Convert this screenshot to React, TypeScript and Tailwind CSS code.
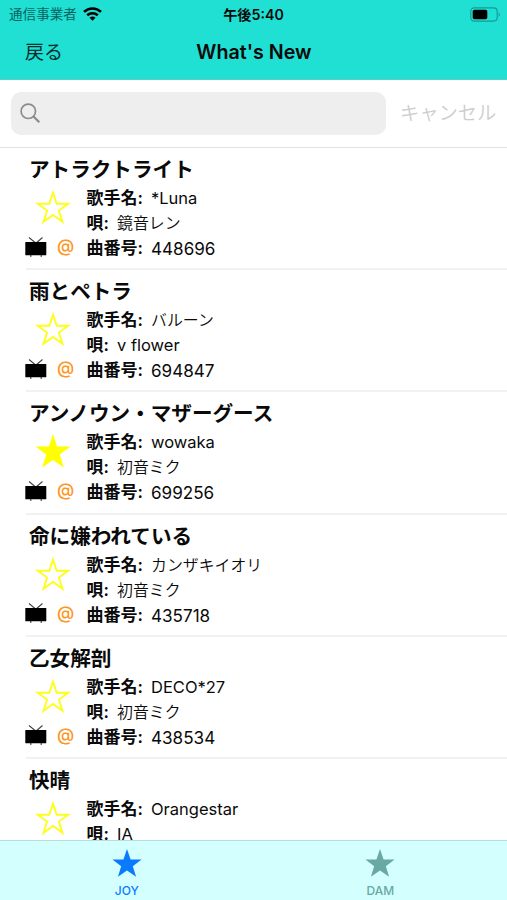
import React from "react";

type Song = {
  title: string;
  artist: string;
  vocal: string;
  number?: string;
  favorite?: boolean;
};

const songs: Song[] = [
  { title: "アトラクトライト", artist: "*Luna", vocal: "鏡音レン", number: "448696" },
  { title: "雨とペトラ", artist: "バルーン", vocal: "v flower", number: "694847" },
  { title: "アンノウン・マザーグース", artist: "wowaka", vocal: "初音ミク", number: "699256", favorite: true },
  { title: "命に嫌われている", artist: "カンザキイオリ", vocal: "初音ミク", number: "435718" },
  { title: "乙女解剖", artist: "DECO*27", vocal: "初音ミク", number: "438534" },
  { title: "快晴", artist: "Orangestar", vocal: "IA" },
];

const STAR = "M18 0 L22.3 12.4 L35.5 12.6 L25 20.6 L28.9 33.2 L18 25.6 L7.1 33.2 L11 20.6 L0.5 12.6 L13.7 12.4 Z";

function RowStar({ filled }: { filled?: boolean }) {
  return (
    <svg className="block h-[36px] w-[38px]" viewBox="0 0 38 36">
      {filled ? (
        <path
          d="M19 0 L23.1 12.4 L36.5 12.5 L25.8 20.6 L29.8 33.6 L19 26 L8.2 33.6 L12.2 20.6 L1.5 12.5 L14.9 12.4 Z"
          fill="#ffff00"
        />
      ) : (
        <path
          d="M19 2.6 L22.7 13.7 L34.3 13.8 L24.9 20.6 L28.5 31.8 L19 25 L9.5 31.8 L13.1 20.6 L3.7 13.8 L15.3 13.7 Z"
          fill="none"
          stroke="#fdfd20"
          strokeWidth="1.9"
        />
      )}
    </svg>
  );
}

function TvIcon() {
  return (
    <svg className="block h-5 w-[22px]" viewBox="0 0 22 20">
      <path d="M4 0.5 L10 5.5 M17.5 0.5 L11.7 5.5 M5.8 18 V20 M16.2 18 V20" stroke="#444" strokeWidth="1.1" fill="none" />
      <rect x="0.3" y="5" width="21" height="13.3" rx="0.5" fill="#000" />
    </svg>
  );
}

function Field({ label, value }: { label: string; value: string }) {
  const digits = /^\d+$/.test(value);
  const latin = /^[\x20-\x7e]+$/.test(value);
  return (
    <div className="flex h-[25px] items-center whitespace-nowrap leading-[25px]">
      <span className="text-[17px] font-bold">{label}</span>
      <span className="w-[13.5px] text-[17px] font-semibold">:</span>
      <span className={digits ? "text-[17.1px]" : latin ? "text-[16.5px]" : "text-[15.9px] font-[350]"}>
        {value}
      </span>
    </div>
  );
}

function SongRow({ song }: { song: Song }) {
  return (
    <li className="flex h-[122.2px] shrink-0 flex-col">
      <h2 className="mt-[8px] h-7 whitespace-nowrap pl-[29px] text-[20.6px] font-bold leading-7">{song.title}</h2>
      <div className="mt-[2px] flex h-[76px]">
        <div className="flex w-[86.5px] flex-col">
          <div className="mt-[4px] pl-[34px]">
            <RowStar filled={song.favorite} />
          </div>
          {song.number && (
            <div className="mt-[10.5px] flex h-5 items-center pl-[25px]">
              <TvIcon />
              <span className="-mt-px pl-[10px] text-[17.5px] font-medium leading-5 text-[#ff9420]">@</span>
            </div>
          )}
        </div>
        <div className="flex flex-col">
          <Field label="歌手名" value={song.artist} />
          <Field label="唄" value={song.vocal} />
          {song.number && <Field label="曲番号" value={song.number} />}
        </div>
      </div>
      <div className="ml-[26px] mt-auto h-[2px] bg-[#f1f1f1]" />
    </li>
  );
}

function Tab({ label, active }: { label: string; active?: boolean }) {
  return (
    <button
      className={
        active
          ? "flex flex-1 flex-col items-center pt-[8px] text-[#0a7aff]"
          : "flex flex-1 flex-col items-center pt-[8px] text-[#69a8a3]"
      }
    >
      <svg className="block h-[28px] w-[30px]" viewBox="0 0 36 33.5">
        <path d={STAR} fill="currentColor" />
      </svg>
      <span className="mt-[6px] text-[12px] font-medium leading-[15px]">{label}</span>
    </button>
  );
}

export default function App() {
  return (
    <div className="flex h-[900px] w-[507px] flex-col overflow-hidden bg-white font-[Inter,'Noto_Sans_CJK_JP',sans-serif] text-[#0a0a0a]">
      <header className="h-[80px] shrink-0 border-b border-[#58cfc8] bg-[#20dfd3]">
        <div className="grid h-[27px] grid-cols-3 items-center pl-[9px] pr-[6px]">
          <div className="flex items-center gap-[6px] text-[13.6px] leading-[27px] text-[#08645f]">
            <span className="pt-px">通信事業者</span>
            <svg className="h-[14px] w-[19px]" viewBox="0 0 19 14" fill="none" stroke="#000" strokeWidth="2.6">
              <path d="M1 4.9 C5.8 0.3 13.2 0.3 18 4.9" />
              <path d="M4.2 8.3 C7.2 5.5 11.8 5.5 14.8 8.3" />
              <path d="M9.5 13.7 L6.5 10.7 C8.2 9.2 10.8 9.2 12.5 10.7 Z" fill="#000" stroke="none" />
            </svg>
          </div>
          <div className="pr-[3px] pt-px text-center text-[14.2px] font-semibold leading-[26px]">午後5:40</div>
          <div className="flex justify-end">
            <svg className="h-[15px] w-[31px]" viewBox="0 0 31 15">
              <rect x="0.8" y="0.9" width="26.4" height="13.2" rx="3.5" fill="none" stroke="#149b94" strokeWidth="1.1" />
              <rect x="2.7" y="2.8" width="14.6" height="9.4" rx="1.8" fill="#000" />
              <path d="M28.7 5.2 Q31 7.5 28.7 9.8 Z" fill="#149b94" />
            </svg>
          </div>
        </div>
        <div className="grid h-[51px] grid-cols-[1fr_auto_1fr] items-center">
          <span className="pl-[25px] pt-px text-[19px] text-[#04302d]">戻る</span>
          <h1 className="pl-px text-[19.7px] font-semibold">What's New</h1>
          <span />
        </div>
      </header>

      <div className="flex h-[68px] shrink-0 items-center border-b border-[#e2e2e2] pl-[11px]">
        <div className="flex h-[43px] w-[375px] items-center rounded-[10px] bg-[#eeeeee] pl-[9px]">
          <svg className="h-[21px] w-[21px]" viewBox="0 0 21 21" fill="none" stroke="#8b8b8b">
            <circle cx="8.3" cy="8.3" r="7.2" strokeWidth="1.7" />
            <path d="M13.5 13.5 L19.3 19.3" strokeWidth="2.2" />
          </svg>
        </div>
        <span className="pl-[14px] text-[19.3px] font-[350] text-[#cdcdcd]">キャンセル</span>
      </div>

      <ul className="flex min-h-0 flex-1 flex-col overflow-hidden">
        {songs.map((song) => (
          <SongRow key={song.title} song={song} />
        ))}
      </ul>

      <nav className="flex h-[60px] shrink-0 border-t border-[#b5dedd] bg-[#d3ffff]">
        <Tab label="JOY" active />
        <Tab label="DAM" />
      </nav>
    </div>
  );
}
